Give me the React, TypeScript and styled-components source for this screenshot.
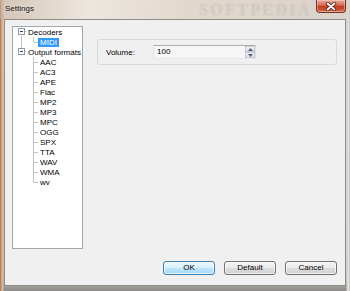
import React from "react";
import styled, { createGlobalStyle } from "styled-components";

const Global = createGlobalStyle`
  html, body { margin: 0; padding: 0; width: 350px; height: 291px; overflow: hidden; background: #fff; }
  #root { width: 350px; height: 291px; }
`;

const uiFont = `"Liberation Sans", Arial, sans-serif`;

const Window = styled.div`
  width: 350px;
  height: 291px;
  box-sizing: border-box;
  display: flex;
  flex-direction: column;
  font-family: ${uiFont};
  font-size: 8px;
  color: #000;
  background:
    linear-gradient(90deg, #9a6a4c 0px, #c89574 1px, #e0b998 2px, #cdb29a 3px, rgba(0, 0, 0, 0) 4px),
    linear-gradient(270deg, #a9a9a9 0px, #e8e8e8 1px, #d4d0cc 3px, rgba(0, 0, 0, 0) 4px),
    linear-gradient(180deg, #e0d6ca 0%, #d9d1c7 60%, #cfcbc6 94%, #8d8b89 100%);
`;

const TitleBar = styled.div`
  position: relative;
  height: 19px;
  flex: none;
  display: flex;
  align-items: flex-start;
  justify-content: space-between;
  padding: 0 4px 0 5px;
  overflow: hidden;
  background: linear-gradient(
    90deg,
    rgba(200, 182, 165, 0.55) 0%,
    rgba(242, 236, 228, 0.75) 25%,
    rgba(226, 218, 208, 0.55) 55%,
    rgba(214, 208, 202, 0.5) 100%
  );
`;

const Title = styled.span`
  line-height: 18px;
  font-size: 8px;
  color: #111;
  text-shadow: 0 0 5px rgba(255, 255, 255, 0.9);
`;

const Watermark = styled.span`
  position: absolute;
  left: 199px;
  top: 1px;
  font-family: "Liberation Serif", "Times New Roman", serif;
  font-weight: bold;
  font-size: 16px;
  letter-spacing: 2.4px;
  line-height: 18px;
  color: rgba(255, 255, 255, 0.33);
  text-shadow: 0 0 1px rgba(120, 110, 100, 0.35);
  pointer-events: none;
`;

const CloseButton = styled.div`
  position: relative;
  width: 30px;
  height: 13px;
  box-sizing: border-box;
  border: 1px solid #6e3328;
  border-top: none;
  border-radius: 0 0 4px 4px;
  background: linear-gradient(180deg, #e9a99a 0%, #d9725c 40%, #c43b22 55%, #d0563a 85%, #e08a6a 100%);
  box-shadow: inset 0 0 0 1px rgba(255, 220, 210, 0.45);
  display: flex;
  align-items: center;
  justify-content: center;
`;

const Client = styled.div`
  flex: 1;
  margin: 0 4px 5px 4px;
  border: 1px solid #8f8b87;
  background: #f0f0f0;
  display: flex;
  flex-direction: column;
  padding: 6px 8px 10px 7px;
  min-height: 0;
`;

const Main = styled.div`
  flex: 1;
  display: flex;
  min-height: 0;
`;

const TreePanel = styled.div`
  position: relative;
  width: 71px;
  box-sizing: border-box;
  border: 1px solid #a3a6aa;
  background: #fff;
  overflow: hidden;
`;

const TreeList = styled.ul`
  list-style: none;
  margin: 0;
  padding: 0;
`;

const Row = styled.li<{ $level: number }>`
  height: 10px;
  display: flex;
  align-items: center;
  padding-left: ${(p) => (p.$level ? 25 : 13)}px;
`;

const NodeLabel = styled.span<{ $selected?: boolean }>`
  line-height: 9px;
  padding: 0 2px;
  white-space: nowrap;
  background: ${(p) => (p.$selected ? "#3399ff" : "transparent")};
  color: ${(p) => (p.$selected ? "#fff" : "#000")};
`;

const TreeLines = styled.svg`
  position: absolute;
  left: 0;
  top: 0;
  pointer-events: none;
`;

const RightPane = styled.div`
  flex: 1;
  padding: 13px 0 0 14px;
`;

const GroupBox = styled.div`
  border: 1px solid #d6dadd;
  border-radius: 3px;
  padding: 5px 8px;
  display: flex;
  align-items: center;
`;

const FieldLabel = styled.span`
  width: 47px;
  flex: none;
`;

const SpinBox = styled.div`
  display: flex;
  width: 103px;
  height: 14px;
  box-sizing: border-box;
  border: 1px solid;
  border-color: #abadb3 #dbdfe6 #e3e9ef #e2e3ea;
  background: #f6f6f6;
`;

const SpinValue = styled.span`
  flex: 1;
  padding-left: 3px;
  line-height: 12px;
`;

const SpinButtons = styled.div`
  width: 10px;
  display: flex;
  flex-direction: column;
`;

const SpinArrow = styled.div`
  flex: 1;
  box-sizing: border-box;
  border: 1px solid #c8ccd2;
  background: linear-gradient(180deg, #f4f4f4, #dedede);
  display: flex;
  align-items: center;
  justify-content: center;
`;

const Footer = styled.div`
  display: flex;
  justify-content: flex-end;
  gap: 9px;
  margin-top: 12px;
`;

const Button = styled.button<{ $default?: boolean }>`
  width: 52px;
  height: 14px;
  padding: 0;
  box-sizing: border-box;
  font-family: ${uiFont};
  font-size: 8px;
  color: #000;
  border-radius: 3px;
  border: 1px solid ${(p) => (p.$default ? "#3c7fb1" : "#707070")};
  background: ${(p) =>
    p.$default
      ? "linear-gradient(180deg, #eaf6fd 0%, #d9f0fc 50%, #bee6fd 50%, #a7d9f5 100%)"
      : "linear-gradient(180deg, #f2f2f2 0%, #ebebeb 50%, #dddddd 50%, #cfcfcf 100%)"};
  box-shadow: inset 0 0 0 1px rgba(255, 255, 255, 0.7);
  line-height: 12px;
`;

const children = ["AAC", "AC3", "APE", "Flac", "MP2", "MP3", "MPC", "OGG", "SPX", "TTA", "WAV", "WMA", "wv"];

type Node = { label: string; level: number; selected?: boolean };

const nodes: Node[] = [
  { label: "Decoders", level: 0 },
  { label: "MIDI", level: 1, selected: true },
  { label: "Output formats", level: 0 },
  ...children.map((c) => ({ label: c, level: 1 })),
];

const Expander = ({ cy }: { cy: number }) => (
  <g>
    <rect x={5.5} y={cy - 3.5} width={6} height={6} fill="#fff" stroke="#8d9aa9" />
    <line x1={7} x2={10} y1={cy - 0.5} y2={cy - 0.5} stroke="#2b3e5e" />
  </g>
);

const Lines = () => {
  const line = { stroke: "#c2c2c2" };
  const lastChild = 2 + children.length;
  return (
    <TreeLines width={69} height={221}>
      <line x1={8.5} x2={8.5} y1={9} y2={22} {...line} />
      <line x1={12} x2={13} y1={4.5} y2={4.5} {...line} />
      <line x1={12} x2={13} y1={24.5} y2={24.5} {...line} />
      <line x1={20.5} x2={20.5} y1={10} y2={15} {...line} />
      <line x1={21} x2={25} y1={15.5} y2={15.5} {...line} />
      <line x1={20.5} x2={20.5} y1={30} y2={lastChild * 10 + 6} {...line} />
      {children.map((_, i) => {
        const y = (i + 3) * 10 + 5.5;
        return <line key={i} x1={21} x2={25} y1={y} y2={y} {...line} />;
      })}
      <Expander cy={5} />
      <Expander cy={25} />
    </TreeLines>
  );
};

export default function App() {
  return (
    <>
      <Global />
      <Window>
        <TitleBar>
          <Title>Settings</Title>
          <Watermark>SOFTPEDIA</Watermark>
          <CloseButton>
            <svg width="12" height="9" viewBox="0 0 12 9">
              <path d="M2.5 1.5 L9.5 7.5 M9.5 1.5 L2.5 7.5" stroke="#4a2018" strokeWidth="3.4" strokeLinecap="round" />
              <path d="M2.5 1.5 L9.5 7.5 M9.5 1.5 L2.5 7.5" stroke="#fff" strokeWidth="1.8" strokeLinecap="round" />
            </svg>
          </CloseButton>
        </TitleBar>
        <Client>
          <Main>
            <TreePanel>
              <TreeList>
                {nodes.map((n) => (
                  <Row key={n.label} $level={n.level}>
                    <NodeLabel $selected={n.selected}>{n.label}</NodeLabel>
                  </Row>
                ))}
              </TreeList>
              <Lines />
            </TreePanel>
            <RightPane>
              <GroupBox>
                <FieldLabel>Volume:</FieldLabel>
                <SpinBox>
                  <SpinValue>100</SpinValue>
                  <SpinButtons>
                    <SpinArrow>
                      <svg width="5" height="3" viewBox="0 0 5 3">
                        <path d="M0 3 L2.5 0 L5 3 Z" fill="#4d6185" />
                      </svg>
                    </SpinArrow>
                    <SpinArrow>
                      <svg width="5" height="3" viewBox="0 0 5 3">
                        <path d="M0 0 L2.5 3 L5 0 Z" fill="#4d6185" />
                      </svg>
                    </SpinArrow>
                  </SpinButtons>
                </SpinBox>
              </GroupBox>
            </RightPane>
          </Main>
          <Footer>
            <Button $default>OK</Button>
            <Button>Default</Button>
            <Button>Cancel</Button>
          </Footer>
        </Client>
      </Window>
    </>
  );
}
